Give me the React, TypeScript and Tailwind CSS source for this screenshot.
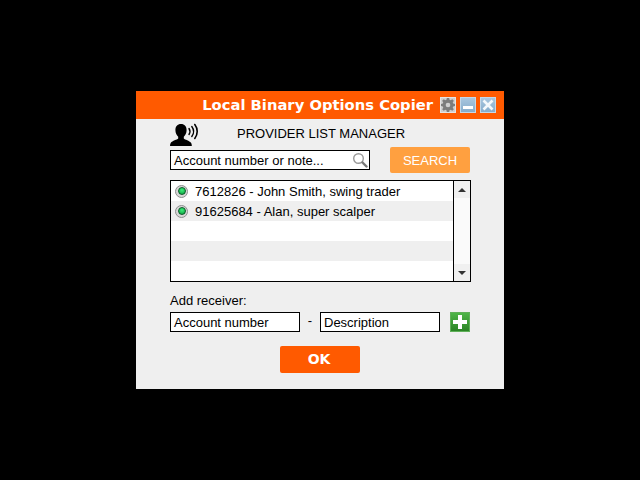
const rows = [
  { id: 1, text: "7612826 - John Smith, swing trader" },
  { id: 2, text: "91625684 - Alan, super scalper" },
  { id: 3, text: "" },
  { id: 4, text: "" },
  { id: 5, text: "" },
];

function StatusDot() {
  return (
    <span className="flex h-[13px] w-[13px] items-center justify-center rounded-full border border-[#8f8f8f] bg-[#d8d8d8]">
      <span className="h-[8px] w-[8px] rounded-full border border-[#0a5a28] bg-[radial-gradient(circle_at_50%_35%,#3df07a,#0a9a3c)]" />
    </span>
  );
}

function GearIcon() {
  return (
    <svg width="14" height="14" viewBox="0 0 24 24">
      <path
        fill="#7d7d7d"
        d="M10 0h4l.6 3.200 2 .8L19.300 2 22 4.800l-1.900 2.700.8 2 3.100.6v3.800l-3.100.6-.8 2L22 19.200 19.300 22l-2.700-1.900-2 .8L14 24h-4l-.6-3.100-2-.8L4.700 22 2 19.200l1.900-2.700-.8-2L0 13.900v-3.800l3.100-.6.8-2L2 4.800 4.700 2l2.700 2 2-.8z"
      />
      <circle cx="12" cy="12" r="4" fill="#cfcfcf" />
    </svg>
  );
}

function SpeakerIcon() {
  return (
    <svg width="30" height="24" viewBox="0 0 30 24">
      <path
        fill="#000"
        d="M11 1c3.600 0 5.600 2.500 5.600 6 0 3-1.300 5.400-2.800 6.800v1.700c1 1.300 5.700 2.200 7.200 4.200.6.800.8 2 .8 3.300H0c0-1.300.2-2.500.8-3.300 1.500-2 6.400-2.900 7.400-4.200v-1.700C6.700 12.400 5.400 10 5.400 7 5.400 3.500 7.400 1 11 1z"
      />
      <g fill="none" stroke="#000" strokeLinecap="round">
        <path strokeWidth="1.400" d="M19 5.500c1.200 1.800 1.200 4.200 0 6" />
        <path strokeWidth="1.400" d="M21.800 3.500c2.200 3 2.200 7 0 10" />
        <path strokeWidth="1.600" d="M24.800 1.500c3.200 4.200 3.200 10 0 14" />
      </g>
    </svg>
  );
}

function MagnifierIcon() {
  return (
    <svg width="16" height="16" viewBox="0 0 16 16">
      <circle cx="6.500" cy="6.500" r="4.800" fill="#fff" stroke="#9a9a9a" strokeWidth="1.400" />
      <path d="M10.500 10.500l4 4" stroke="#777" strokeWidth="2.400" strokeLinecap="round" />
    </svg>
  );
}

export default function App() {
  return (
    <div className="flex h-screen items-center justify-center bg-black font-['Liberation_Sans',Arial,sans-serif] text-[13px] text-black">
      <div className="flex h-[298px] w-[368px] flex-col bg-[#efefef]">
        <div className="flex h-[28px] items-center justify-end gap-[4px] bg-[#ff5a00] pr-[8px]">
          <span className="mr-[3px] font-['DejaVu_Sans',sans-serif] text-[14.750px] font-bold text-white">
            Local Binary Options Copier
          </span>
          <span className="flex h-[16px] w-[16px] items-center justify-center border border-[#e4e4e4] bg-[#cfcfcf]">
            <GearIcon />
          </span>
          <span className="flex h-[16px] w-[16px] items-end justify-center border border-[#c4d8e8] bg-gradient-to-b from-[#a9c6de] to-[#86adcc] pb-[3px]">
            <span className="h-[3px] w-[10px] bg-white" />
          </span>
          <span className="flex h-[16px] w-[16px] items-center justify-center border border-[#c4d8e8] bg-gradient-to-b from-[#a9c6de] to-[#86adcc]">
            <svg width="12" height="12" viewBox="0 0 12 12">
              <path d="M1.500 1.500l9 9M10.500 1.500l-9 9" stroke="#f4f8fb" strokeWidth="2.600" />
            </svg>
          </span>
        </div>

        <div className="flex flex-col px-[34px]">
          <div className="flex h-[28px] items-center">
            <span className="mt-[3px] w-[67px]">
              <SpeakerIcon />
            </span>
            <span className="pt-[2px]">PROVIDER LIST MANAGER</span>
          </div>

          <div className="flex items-start justify-between">
            <div className="mt-[3px] flex h-[20px] w-[200px] items-center justify-between border border-black bg-white pl-[3px] pr-[1px]">
              <span className="pt-[1px]">Account number or note...</span>
              <MagnifierIcon />
            </div>
            <div className="flex h-[26px] w-[80px] items-center justify-center rounded-[2px] bg-[#ffa040] pt-[1px] text-white">
              SEARCH
            </div>
          </div>

          <div className="mt-[7px] flex h-[102px] w-[301px] border border-black bg-white">
            <div className="flex w-[282px] flex-col">
              {rows.map((row, i) => (
                <div
                  key={row.id}
                  className={`flex h-[20px] items-center gap-[7px] pl-[4px] ${i % 2 === 1 ? "bg-[#efefef]" : "bg-white"}`}
                >
                  {row.text && <StatusDot />}
                  {row.text && <span className="pt-[1px]">{row.text}</span>}
                </div>
              ))}
            </div>
            <div className="flex w-[17px] flex-col justify-between border-l border-black bg-[#fafafa]">
              <div className="flex h-[17px] items-center justify-center bg-[#f0f0f0]">
                <span className="h-0 w-0 border-x-[4px] border-b-[4px] border-x-transparent border-b-[#333]" />
              </div>
              <div className="flex h-[17px] items-center justify-center bg-[#f0f0f0]">
                <span className="h-0 w-0 border-x-[4px] border-t-[4px] border-x-transparent border-t-[#333]" />
              </div>
            </div>
          </div>

          <div className="mt-[11px] leading-[16px]">Add receiver:</div>

          <div className="mt-[3px] flex h-[20px] items-center">
            <div className="flex h-[20px] w-[130px] items-center border border-black bg-white pl-[3px] pt-[1px]">
              Account number
            </div>
            <span className="-mt-[2px] w-[20px] text-center">-</span>
            <div className="flex h-[20px] w-[120px] items-center border border-black bg-white pl-[3px] pt-[1px]">
              Description
            </div>
            <span className="relative ml-[10px] flex h-[20px] w-[20px] items-center justify-center border border-[#5fb058] bg-gradient-to-b from-[#4fb548] to-[#2a8424]">
              <span className="h-[14px] w-[4px] bg-white" />
              <span className="absolute h-[4px] w-[14px] bg-white" />
            </span>
          </div>

          <div className="mt-[14px] flex justify-center">
            <div className="flex h-[27px] w-[80px] items-center justify-center rounded-[2px] bg-[#ff5a00] pr-[2px] font-['DejaVu_Sans',sans-serif] text-[14px] font-bold text-white">
              OK
            </div>
          </div>
        </div>
      </div>
    </div>
  );
}
